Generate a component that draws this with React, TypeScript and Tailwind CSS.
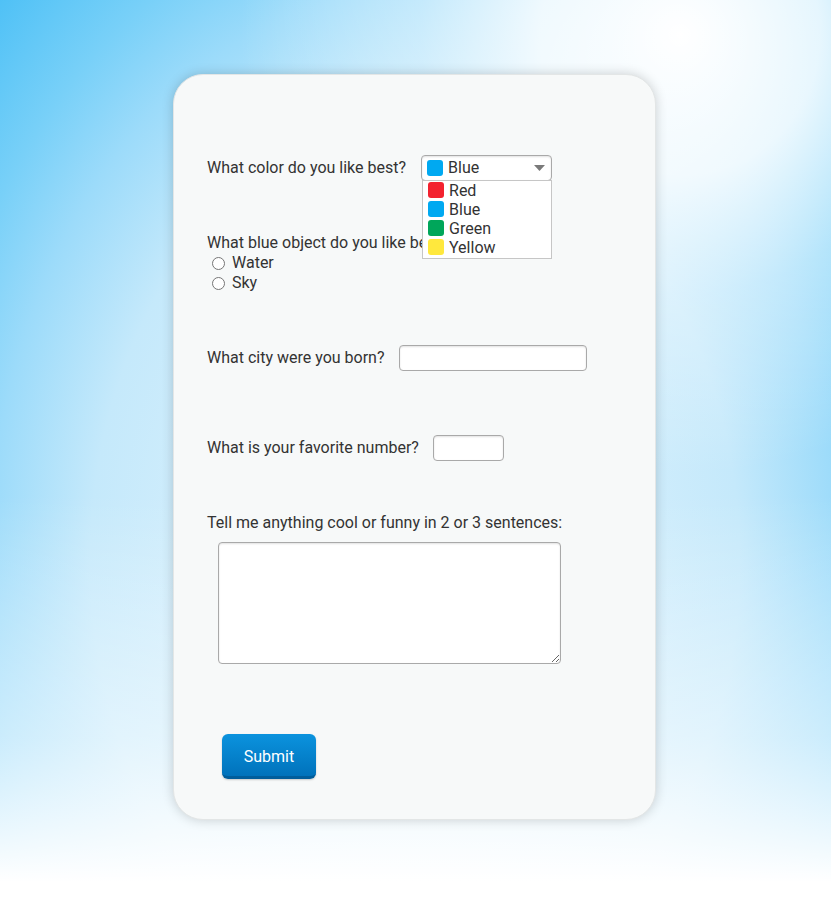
import { useState } from "react"

const colors = [
  { name: "Red", swatch: "bg-[#f3222f]" },
  { name: "Blue", swatch: "bg-[#00a9f1]" },
  { name: "Green", swatch: "bg-[#00a65a]" },
  { name: "Yellow", swatch: "bg-[#ffe83d]" },
]

function Swatch({ className }: { className: string }) {
  return <span className={`inline-block w-[16px] h-[16px] rounded-[3px] ${className}`} />
}

export default function App() {
  const [picked] = useState("Blue")
  const [object, setObject] = useState<string | null>(null)

  return (
    <div className="min-h-[900px] pt-[74px] font-['Roboto',sans-serif] text-[16px] text-[#333333] bg-[linear-gradient(to_bottom,rgba(255,255,255,0)_55%,rgba(255,255,255,0.5)_82%,#ffffff_98%),radial-gradient(circle_at_680px_35px,#ffffff_0px,rgba(255,255,255,0.85)_140px,rgba(255,255,255,0.4)_260px,rgba(255,255,255,0)_440px),radial-gradient(ellipse_590px_790px_at_415px_560px,#e8f6fe_0%,#c5e9fb_55%,#9cdbfa_72%,#78d0f8_84%,#4fc1f6_100%)]">
      <div className="ml-[173px] w-[483px] h-[746px] rounded-[30px] bg-[#f7f9f9] border border-[#e3e6e6] shadow-[0_0_12px_rgba(0,0,0,0.18)] pt-[80px] pl-[33px] leading-[20px]">
        <div className="flex items-center h-[25px]">
          <span>What color do you like best?</span>
          <div className="relative ml-[15px] w-[131px] h-[26px]">
            <div className="flex items-center h-full bg-white border border-[#a9a9a9] rounded-[4px] shadow-[inset_0_1px_2px_rgba(0,0,0,0.12)] pl-[5px] pr-[6px]">
              <Swatch className="bg-[#00a9f1]" />
              <span className="ml-[5px] flex-1">{picked}</span>
              <svg width="11" height="6" viewBox="0 0 11 6">
                <path d="M0 0 L11 0 L5.5 6 Z" fill="#7a7a7a" />
              </svg>
            </div>
            <div className="absolute top-[25px] left-[1px] w-[130px] bg-white border border-[#c6c6c6] pl-[5px] pb-[1px] z-10">
              {colors.map((c) => (
                <div key={c.name} className="flex items-center h-[19px] leading-[19px]">
                  <Swatch className={c.swatch} />
                  <span className="ml-[5px]">{c.name}</span>
                </div>
              ))}
            </div>
          </div>
        </div>

        <div className="mt-[53px]">
          <div>What blue object do you like best?</div>
          {["Water", "Sky"].map((o) => (
            <label key={o} className="flex items-center h-[20px] pl-[5px] cursor-pointer" onClick={() => setObject(o)}>
              <span className="w-[13px] h-[13px] rounded-full border border-[#767676] bg-white flex items-center justify-center">
                {object === o && <span className="w-[7px] h-[7px] rounded-full bg-[#0075ff]" />}
              </span>
              <span className="ml-[7px]">{o}</span>
            </label>
          ))}
        </div>

        <div className="flex items-center mt-[52px] h-[26px]">
          <span>What city were you born?</span>
          <input
            type="text"
            className="ml-[15px] w-[188px] h-[26px] bg-white border border-[#a9a9a9] rounded-[4px] shadow-[inset_0_1px_2px_rgba(0,0,0,0.12)] px-[4px] outline-none"
          />
        </div>

        <div className="flex items-center mt-[64px] h-[26px]">
          <span>What is your favorite number?</span>
          <input
            type="text"
            className="ml-[14px] w-[71px] h-[26px] bg-white border border-[#a9a9a9] rounded-[4px] shadow-[inset_0_1px_2px_rgba(0,0,0,0.12)] px-[4px] outline-none"
          />
        </div>

        <div className="mt-[52px]">Tell me anything cool or funny in 2 or 3 sentences:</div>
        <textarea className="block mt-[9px] ml-[11px] w-[343px] h-[122px] bg-white border border-[#a9a9a9] rounded-[4px] shadow-[inset_0_1px_2px_rgba(0,0,0,0.12)] p-[4px] outline-none" />

        <button className="block mt-[70px] ml-[15px] w-[94px] h-[45px] rounded-[6px] bg-[linear-gradient(to_bottom,#0b93de,#0072bb)] border-b-[3px] border-[#005d9b] shadow-[0_1px_2px_rgba(0,0,0,0.2)] text-white text-[16px] pt-[4px]">
          Submit
        </button>
      </div>
    </div>
  )
}
